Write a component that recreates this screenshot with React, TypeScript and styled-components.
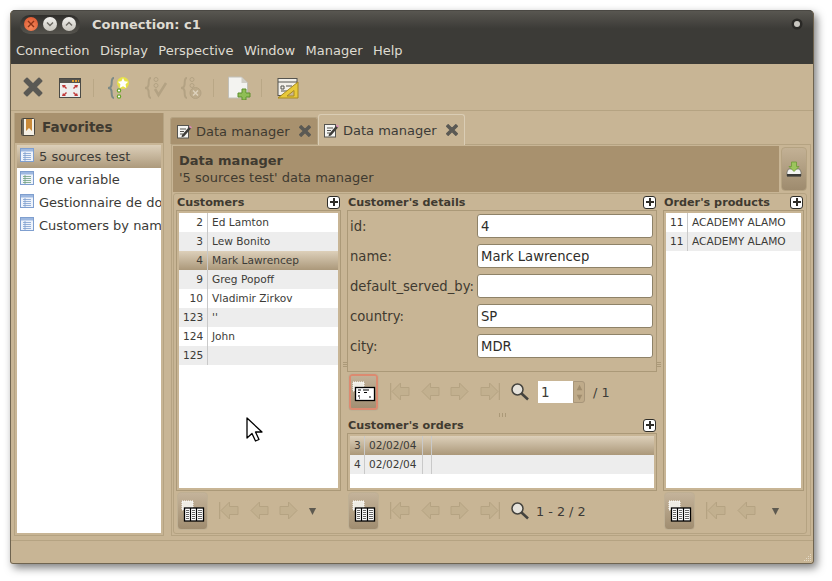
import React from 'react';
import styled, { createGlobalStyle } from 'styled-components';

const GlobalStyle = createGlobalStyle`
  html, body {
    margin: 0;
    padding: 0;
    background: #fff;
    font-family: "DejaVu Sans", sans-serif;
  }
`;

const Page = styled.div`
  width: 832px;
  height: 581px;
  overflow: hidden;
  padding: 10px 0 0 10px;
  box-sizing: border-box;
`;

const Win = styled.div`
  position: relative;
  width: 804px;
  height: 554px;
  display: flex;
  flex-direction: column;
  background: #c8b595;
  border-radius: 5px 5px 3px 3px;
  box-shadow: 3px 4px 8px rgba(0, 0, 0, 0.5);
  color: #3c3b37;
  overflow: hidden;
  &::after {
    content: '';
    position: absolute;
    inset: 0;
    border: 1px solid #6f6450;
    border-top-color: #4a4843;
    border-radius: 5px 5px 3px 3px;
    pointer-events: none;
  }
`;

const TitleBar = styled.div`
  height: 27px;
  display: flex;
  align-items: center;
  background: linear-gradient(#5a5852, #3c3b37 70%);
  padding: 1px 15px 0 10px;
  box-sizing: border-box;
`;

const Controls = styled.div`
  width: 60px;
  height: 19px;
  border-radius: 10px;
  background: linear-gradient(#2f2e2b, #55534d);
  display: flex;
  align-items: center;
  justify-content: space-around;
  padding: 0 2px;
  box-sizing: border-box;
`;

const Ctl = styled.span<{ $close?: boolean }>`
  width: 14px;
  height: 14px;
  border-radius: 50%;
  background: ${(p) => (p.$close ? 'radial-gradient(circle at 50% 70%, #f58a5c, #d9502a)' : 'linear-gradient(#f3f2ef, #c6c3bb)')};
  display: flex;
  align-items: center;
  justify-content: center;
`;

const WinTitle = styled.div`
  margin-left: 12px;
  flex: 1;
  font-size: 13px;
  font-weight: 700;
  color: #dfdbd2;
`;

const Dot = styled.span`
  width: 6px;
  height: 6px;
  border-radius: 50%;
  background: #c9c7c1;
  box-shadow: 0 0 0 2.5px #2a2926;
  margin-right: -1px;
`;

const MenuBar = styled.div`
  height: 27px;
  display: flex;
  align-items: center;
  gap: 10.4px;
  background: #3c3b37;
  padding: 0 6px 1px;
  box-sizing: border-box;
  color: #dfdbd2;
  font-size: 13px;
`;

const Toolbar = styled.div`
  height: 46px;
  display: flex;
  align-items: center;
  padding: 1px 0 0 12px;
  box-sizing: border-box;
`;

const ToolIcon = styled.span<{ $w?: number; $mr?: number }>`
  width: ${(p) => p.$w ?? 24}px;
  height: 24px;
  margin-right: ${(p) => p.$mr ?? 0}px;
  display: flex;
`;

const ToolSep = styled.span<{ $mr: number }>`
  width: 1px;
  height: 18px;
  background: #b9a786;
  margin-right: ${(p) => p.$mr}px;
`;

const Main = styled.div`
  height: 430px;
  flex: none;
  display: grid;
  grid-template-columns: 150px 1fr;
  gap: 4px;
  padding: 2px 2px 0 4px;
  border-top: 1px solid #b5a382;
  box-sizing: border-box;
`;

const Sidebar = styled.aside`
  background: #c8b595;
  border: 1px solid #b5a382;
  border-top: none;
  display: flex;
  flex-direction: column;
  height: 423px;
  box-sizing: border-box;
`;

const SideHead = styled.div`
  height: 30px;
  flex: none;
  background: #a8916e;
  display: flex;
  align-items: center;
  gap: 7px;
  padding: 0 0 2px 6px;
  box-sizing: border-box;
  font-size: 13.5px;
  font-weight: 700;
  color: #3f3a30;
`;

const SideList = styled.div`
  flex: 1;
  margin: 2px 2px 2px;
  background: #fff;
  overflow: hidden;
`;

const SideRow = styled.div<{ $sel?: boolean }>`
  height: 23px;
  display: flex;
  align-items: center;
  gap: 5px;
  padding-left: 3px;
  font-size: 13px;
  white-space: nowrap;
  background: ${(p) => (p.$sel ? 'linear-gradient(#dccfb9, #ad9a7c)' : '#fff')};
`;

const SideLabel = styled.span`
  flex: 1;
  min-width: 0;
  overflow: hidden;
`;

const Content = styled.div`
  display: flex;
  flex-direction: column;
  margin-top: 1px;
  min-width: 0;
`;

const Tabs = styled.div`
  height: 30px;
  display: flex;
  align-items: flex-end;
  padding-left: 2px;
  flex: none;
`;

const Tab = styled.div<{ $active?: boolean }>`
  position: relative;
  z-index: ${(p) => (p.$active ? 1 : 0)};
  height: ${(p) => (p.$active ? 31 : 27)}px;
  margin-bottom: ${(p) => (p.$active ? -1 : 0)}px;
  width: ${(p) => (p.$active ? 147 : 148)}px;
  box-sizing: border-box;
  display: flex;
  align-items: center;
  gap: 4px;
  padding: 0 ${(p) => (p.$active ? 4 : 5)}px;
  font-size: 13px;
  white-space: nowrap;
  background: ${(p) => (p.$active ? '#c8b595' : '#a8916e')};
  border: 1px solid ${(p) => (p.$active ? '#dacdb5' : '#b5a382')};
  border-bottom: none;
  border-radius: 3px 3px 0 0;
  color: ${(p) => (p.$active ? '#3c3b37' : '#3f3a30')};
`;

const TabClose = styled.span`
  display: flex;
  flex: none;
  margin-left: 4px;
`;

const TabPanel = styled.div`
  flex: 1;
  border: 1px solid #b5a382;
  margin: 0 1px 4px 3px;
  padding: 1px 3px 1px 1px;
  display: flex;
  flex-direction: column;
  box-sizing: border-box;
  min-height: 0;
`;

const Header = styled.div`
  height: 46px;
  flex: none;
  display: flex;
  gap: 2px;
`;

const HeaderText = styled.div`
  flex: 1;
  background: #a8916e;
  padding: 6px 6px 0;
  font-size: 13px;
  line-height: 17px;
  color: #3f3a30;
  b {
    display: block;
  }
`;

const SaveBtn = styled.div`
  width: 26px;
  margin: 1px 0;
  box-sizing: border-box;
  border: 1px solid #b5a382;
  border-radius: 4px;
  background: linear-gradient(#c3b195, #9e8b6e);
  display: flex;
  align-items: center;
  justify-content: center;
`;

const Panes = styled.div`
  position: relative;
  flex: 1;
  margin-top: 1px;
  border: 1px solid #b5a382;
  border-radius: 3px;
  display: grid;
  grid-template-columns: 169px 314px 145px;
  column-gap: 2px;
  min-height: 0;
`;

const VGrip = styled.span<{ $x: number; $y: number }>`
  position: absolute;
  left: ${(p) => p.$x}px;
  top: ${(p) => p.$y}px;
  width: 4px;
  height: 5px;
  border-top: 1px solid #ab9978;
  border-bottom: 1px solid #ab9978;
  box-sizing: border-box;
  &::after {
    content: '';
    display: block;
    height: 1px;
    margin-top: 1px;
    background: #ab9978;
  }
`;

const Col = styled.div`
  display: flex;
  flex-direction: column;
  padding: 0 2px;
  min-width: 0;
`;

const PaneTitle = styled.div`
  height: 16px;
  flex: none;
  display: flex;
  align-items: center;
  justify-content: space-between;
  padding: 0 1px;
  font-size: 11.2px;
  font-weight: 700;
  color: #3f3a30;
  white-space: nowrap;
`;

const Plus = styled.span`
  width: 13px;
  height: 13px;
  box-sizing: border-box;
  background: #fff;
  border: 1px solid #2f2d28;
  border-radius: 3px;
  display: flex;
  align-items: center;
  justify-content: center;
  flex: none;
`;

const TableBox = styled.div<{ $h: number }>`
  height: ${(p) => p.$h}px;
  flex: none;
  border: 1px solid #ab9978;
  padding: 2px;
  box-sizing: border-box;
`;

const TableInner = styled.div`
  height: 100%;
  background: #fff;
  overflow: hidden;
`;

const Row = styled.div<{ $tone?: 'alt' | 'sel' }>`
  height: 19px;
  display: flex;
  align-items: stretch;
  font-size: 10.6px;
  line-height: 19px;
  white-space: nowrap;
  background: ${(p) =>
    p.$tone === 'sel' ? 'linear-gradient(#ddd0ba, #ab987a)' : p.$tone === 'alt' ? '#ededed' : '#fff'};
`;

const Cell = styled.span<{ $w?: number; $num?: boolean }>`
  box-sizing: border-box;
  width: ${(p) => (p.$w ? `${p.$w}px` : 'auto')};
  flex: ${(p) => (p.$w ? 'none' : '1')};
  padding: 0 4px;
  text-align: ${(p) => (p.$num ? 'right' : 'left')};
  border-right: ${(p) => (p.$w ? '1px solid #c9c9c9' : 'none')};
`;

const Details = styled.div`
  height: 162px;
  flex: none;
  border: 1px solid #ab9978;
  padding: 3px 3px 0 2px;
  box-sizing: border-box;
  display: flex;
  flex-direction: column;
  gap: 6px;
`;

const Field = styled.div`
  height: 24px;
  display: grid;
  grid-template-columns: 127px 1fr;
  align-items: center;
  font-size: 13.2px;
  color: #3f3a30;
`;

const FieldValue = styled.div`
  height: 24px;
  box-sizing: border-box;
  background: #fff;
  border: 1px solid #8e8268;
  border-radius: 3px;
  padding-left: 3px;
  line-height: 23px;
  color: #2e2d2a;
`;

const Nav = styled.div`
  height: 40px;
  flex: none;
  display: flex;
  align-items: center;
  padding-left: 1px;
`;

const NavBtn = styled.div<{ $on?: boolean }>`
  width: 31px;
  height: 38px;
  flex: none;
  box-sizing: border-box;
  border: 1px solid #bfb094;
  border-radius: 4px;
  background: linear-gradient(#c4b39a, #a08d70);
  display: flex;
  align-items: center;
  justify-content: center;
  margin-right: 6px;
  box-shadow: ${(p) => (p.$on ? 'inset 0 0 0 2px #dc8a70' : 'none')};
`;

const NavArrow = styled.span`
  width: 30px;
  height: 20px;
  flex: none;
  display: flex;
  justify-content: center;
`;

const CaretSlot = styled.span<{ $w: number }>`
  width: ${(p) => p.$w}px;
  flex: none;
  display: flex;
  justify-content: center;
`;

const SearchSlot = styled.span`
  display: flex;
  flex: none;
  margin-left: 5px;
`;

const NavText = styled.span`
  font-size: 12.8px;
  margin-left: 6px;
  white-space: nowrap;
`;

const Spin = styled.div`
  display: flex;
  height: 22px;
  margin-left: 8px;
  margin-right: 2px;
`;

const SpinInput = styled.div`
  width: 35px;
  background: #fff;
  font-size: 13.5px;
  line-height: 22px;
  padding-left: 3px;
  box-sizing: border-box;
`;

const SpinArrows = styled.div`
  width: 12px;
  border: 1px solid #a8967a;
  border-radius: 0 3px 3px 0;
  background: #bfab8a;
  box-sizing: border-box;
  display: flex;
  flex-direction: column;
  align-items: center;
  justify-content: space-around;
`;

const Sash = styled.div`
  height: 5px;
  flex: none;
  display: flex;
  justify-content: center;
  align-items: center;
  gap: 2px;
  i {
    width: 1px;
    height: 4px;
    background: #ab9978;
  }
`;

const Status = styled.div`
  flex: 1;
  border-top: 1px solid #b5a382;
  position: relative;
`;

const Grip = styled.svg`
  position: absolute;
  right: 2px;
  bottom: 2px;
`;

const Cursor = styled.svg`
  position: absolute;
  left: 236px;
  top: 407px;
`;

function CloseIcon({ size = 22, color = '#5a5954' }: { size?: number; color?: string }) {
  return (
    <svg width={size} height={size} viewBox="0 0 22 22" style={{ flex: 'none' }}>
      <path d="M5 2.500 11 8.500 17 2.500 19.500 5 13.500 11 19.500 17 17 19.500 11 13.500 5 19.500 2.500 17 8.500 11 2.500 5z" fill={color} stroke={color} strokeWidth="2" strokeLinejoin="round" />
    </svg>
  );
}

function FullscreenIcon() {
  return (
    <svg width="22" height="24" viewBox="0 0 22 24">
      <rect x="0.500" y="2.500" width="21" height="19" fill="#eee" stroke="#4a4a46" />
      <rect x="1" y="3" width="20" height="4" fill="#55544f" />
      <path d="M13 5h2M16 5h2M19 5h1" stroke="#e0a030" strokeWidth="2" />
      <path d="M3 9h4l-1 1 2 2-1 1-2-2-1 1zM19 9h-4l1 1-2 2 1 1 2-2 1 1zM3 20h4l-1-1 2-2-1-1-2 2-1-1zM19 20h-4l1-1-2-2 1-1 2 2 1-1z" fill="#c03a3a" />
    </svg>
  );
}

function BraceIcon({ kind }: { kind: 'star' | 'check' | 'cross' }) {
  const c = kind === 'star' ? '#7d8a86' : '#b3a283';
  return (
    <svg width="24" height="24" viewBox="0 0 24 24">
      <path d="M7 2C4 2 5 6 4.500 9 4.300 11 3 12 1 12c2 0 3.300 1 3.500 3 .5 3-.5 7 2.500 7" fill="none" stroke={c} strokeWidth="2" />
      {kind === 'star' && (
        <>
          <circle cx="16" cy="7" r="6" fill="#ecea3a" opacity="0.85" />
          <path d="m16 2 1.600 3.300 3.600.5-2.600 2.500.6 3.600-3.200-1.700-3.200 1.700.6-3.600-2.600-2.500 3.600-.5z" fill="#fff" />
          <circle cx="12" cy="14.500" r="1.700" fill="#fff" stroke="#6aa52a" strokeWidth="1.200" />
          <circle cx="12" cy="20.500" r="1.700" fill="#fff" stroke="#6aa52a" strokeWidth="1.200" />
        </>
      )}
      {kind === 'check' && (
        <>
          <circle cx="12" cy="3.500" r="2" fill="none" stroke={c} />
          <circle cx="12" cy="9.500" r="2" fill="none" stroke={c} />
          <path d="m11 13 3.500 6L22 7" fill="none" stroke={c} strokeWidth="2.500" />
        </>
      )}
      {kind === 'cross' && (
        <>
          <circle cx="12" cy="3.500" r="2" fill="none" stroke={c} />
          <circle cx="12" cy="9.500" r="2" fill="none" stroke={c} />
          <circle cx="15.500" cy="17" r="5.500" fill="#bcaa8a" stroke={c} />
          <path d="m13 14.500 5 5m0-5-5 5" stroke="#ddd2bc" strokeWidth="1.500" />
        </>
      )}
    </svg>
  );
}

function NewDocIcon() {
  return (
    <svg width="24" height="24" viewBox="0 0 24 24">
      <path d="M1.500 1h13l6 6v15h-19z" fill="#f3f3f0" stroke="#c2c0b8" />
      <path d="M14.500 1v6h6z" fill="#d0cec6" />
      <path d="M15 13h4v4h4v4h-4v3h-4v-3h-4v-4h4z" fill="#8fbe55" stroke="#5f8f2f" />
    </svg>
  );
}

function DesignIcon() {
  return (
    <svg width="24" height="24" viewBox="0 0 24 24">
      <rect x="2" y="2.500" width="19" height="17" fill="#f2f0ea" stroke="#55544f" />
      <path d="M2 6h19M5 10h3v3H5zM10 10h6M5 15h8" stroke="#55544f" fill="none" />
      <path d="M2 22 22 6v16z" fill="#e8c93a" stroke="#a88a1e" />
      <path d="m11 20 7-5.500V20z" fill="#c8b595" stroke="#a88a1e" />
    </svg>
  );
}

function BookmarkIcon() {
  return (
    <svg width="14" height="18" viewBox="0 0 14 18">
      <rect x="0.500" y="0.500" width="13" height="17" rx="1" fill="#f4efe4" stroke="#4a463c" />
      <rect x="1" y="1" width="2" height="16" fill="#6b665a" />
      <path d="M5 1h6v12l-3-3-3 3z" fill="#c98a3a" />
    </svg>
  );
}

function SheetIcon({ green }: { green?: boolean }) {
  return (
    <svg width="14" height="14" viewBox="0 0 14 14" style={{ flex: 'none', marginTop: -3 }}>
      <rect x="0.500" y="0.500" width="13" height="13" fill="#eef3fb" stroke="#7f9fcf" />
      <rect x="1" y="1" width="12" height="2.500" fill="#9db8e0" />
      <path d="M3 5.500h8M3 7.500h8M3 9.500h8M3 11.500h8M5 4v9" stroke={green ? '#6f9f7f' : '#7f9fcf'} strokeWidth="0.800" />
    </svg>
  );
}

function PencilPage() {
  return (
    <svg width="16" height="16" viewBox="0 0 16 16" style={{ flex: 'none' }}>
      <rect x="1.500" y="2.500" width="11" height="12.500" fill="#f5f5f2" stroke="#55544f" />
      <path d="M4 6h6M4 8.500h4M4 11h3" stroke="#55544f" />
      <path d="m6 12 7-8 2 1.500-7 8-2.500.8z" fill="#3d3c38" />
      <path d="m13 4 1-1.200 2 1.500-1 1.200z" fill="#d889b8" />
    </svg>
  );
}

function SaveIcon() {
  return (
    <svg width="16" height="16" viewBox="0 0 16 16">
      <path d="M1 11 2.500 8h11L15 11v4H1z" fill="#f3f3f1" stroke="#66655f" strokeWidth="0.700" />
      <rect x="1" y="13" width="14" height="2.500" fill="#3c3b37" />
      <path d="M5.500 1h5v4.500H13L8 10.500 3 5.500h2.500z" fill="#9cc55c" stroke="#6d9a36" strokeWidth="0.800" />
    </svg>
  );
}

function PlusGlyph() {
  return (
    <svg width="8" height="8" viewBox="0 0 8 8">
      <path d="M3 0h2v3h3v2H5v3H3V5H0V3h3z" fill="#2f2d28" />
    </svg>
  );
}

function NavIcon({ dir, bar }: { dir: 'l' | 'r'; bar?: boolean }) {
  const body = 'M10.500 1 2 9.500 10.500 18v-4.500H19v-8h-8.500z';
  return (
    <svg width="20" height="20" viewBox="0 0 20 20" style={{ transform: dir === 'r' ? 'scaleX(-1)' : undefined }}>
      <path d={body} fill="#c2b08f" stroke="#b5a382" />
      {bar && <path d="M0.500 1v17" stroke="#b5a382" strokeWidth="1.500" />}
    </svg>
  );
}

function Search() {
  return (
    <svg width="20" height="20" viewBox="0 0 20 20" style={{ flex: 'none' }}>
      <circle cx="7.500" cy="7.500" r="5.500" fill="#e6e3dc" stroke="#44433e" strokeWidth="1.500" />
      <path d="m11.500 11.500 6.500 6" stroke="#44433e" strokeWidth="2.500" />
    </svg>
  );
}

function TableModeIcon({ form }: { form?: boolean }) {
  return (
    <svg width="24" height="26" viewBox="0 0 24 26">
      <rect x="1" y="3" width="11" height="9" fill="#efece4" stroke="#fff" strokeDasharray="1 1" />
      {form ? (
        <>
          <rect x="3.500" y="8.500" width="19" height="13" fill="#fff" stroke="#000" strokeWidth="1.300" />
          <path d="M6 11h3M6 13.500h2M11 11h6M12 13.500h3M6 17h2M7 19h1M17 18h2" stroke="#000" strokeWidth="1.200" />
        </>
      ) : (
        <>
          <rect x="3.500" y="10" width="19" height="13" fill="#fff" stroke="#000" strokeWidth="1.300" />
          <path d="M5 12.500h3M5 14.500h3M5 16.500h3M5 18.500h3M5 20.500h3M11 12.500h3M11 14.500h3M11 16.500h3M11 18.500h3M11 20.500h3M17 12.500h4M17 14.500h4M17 16.500h4M17 18.500h4M17 20.500h4" stroke="#666" />
          <path d="M9.500 10v13M15.500 10v13" stroke="#000" strokeWidth="1.200" />
        </>
      )}
    </svg>
  );
}

function Caret({ size = 9, up, color = '#5e5a50' }: { size?: number; up?: boolean; color?: string }) {
  return (
    <svg width={size} height={size} viewBox="0 0 10 10" style={{ transform: up ? 'rotate(180deg)' : undefined }}>
      <path d="M1 1h8L5 9z" fill={color} />
    </svg>
  );
}

const customers: [string, string][] = [
  ['2', 'Ed Lamton'],
  ['3', 'Lew Bonito'],
  ['4', 'Mark Lawrencep'],
  ['9', 'Greg Popoff'],
  ['10', 'Vladimir Zirkov'],
  ['123', "''"],
  ['124', 'John'],
  ['125', ''],
];

const fields: [string, string][] = [
  ['id:', '4'],
  ['name:', 'Mark Lawrencep'],
  ['default_served_by:', ''],
  ['country:', 'SP'],
  ['city:', 'MDR'],
];

export default function App() {
  return (
    <Page>
      <GlobalStyle />
      <Win>
        <TitleBar>
          <Controls>
            <Ctl $close>
              <svg width="8" height="8" viewBox="0 0 8 8"><path d="m1 1 6 6m0-6-6 6" stroke="#8a3216" strokeWidth="1.400" /></svg>
            </Ctl>
            <Ctl>
              <svg width="8" height="8" viewBox="0 0 8 8"><path d="m1 2.500 3 3 3-3" fill="none" stroke="#6b6962" strokeWidth="1.400" /></svg>
            </Ctl>
            <Ctl>
              <svg width="8" height="8" viewBox="0 0 8 8"><path d="m1 5.500 3-3 3 3" fill="none" stroke="#6b6962" strokeWidth="1.400" /></svg>
            </Ctl>
          </Controls>
          <WinTitle>Connection: c1</WinTitle>
          <Dot />
        </TitleBar>
        <MenuBar>
          <span>Connection</span>
          <span>Display</span>
          <span>Perspective</span>
          <span>Window</span>
          <span>Manager</span>
          <span>Help</span>
        </MenuBar>
        <Toolbar>
          <ToolIcon $w={22} $mr={15}><CloseIcon /></ToolIcon>
          <ToolIcon $w={22} $mr={12}><FullscreenIcon /></ToolIcon>
          <ToolSep $mr={13} />
          <ToolIcon $mr={13}><BraceIcon kind="star" /></ToolIcon>
          <ToolIcon $mr={12}><BraceIcon kind="check" /></ToolIcon>
          <ToolIcon $mr={9}><BraceIcon kind="cross" /></ToolIcon>
          <ToolSep $mr={13} />
          <ToolIcon $mr={10}><NewDocIcon /></ToolIcon>
          <ToolSep $mr={14} />
          <ToolIcon><DesignIcon /></ToolIcon>
        </Toolbar>
        <Main>
          <Sidebar>
            <SideHead>
              <BookmarkIcon />
              Favorites
            </SideHead>
            <SideList>
              <SideRow $sel><SheetIcon /><SideLabel>5 sources test</SideLabel></SideRow>
              <SideRow><SheetIcon green /><SideLabel>one variable</SideLabel></SideRow>
              <SideRow><SheetIcon /><SideLabel>Gestionnaire de documents</SideLabel></SideRow>
              <SideRow><SheetIcon /><SideLabel>Customers by name</SideLabel></SideRow>
            </SideList>
          </Sidebar>
          <Content>
            <Tabs>
              <Tab><PencilPage />Data manager<TabClose><CloseIcon size={14} /></TabClose></Tab>
              <Tab $active><PencilPage />Data manager<TabClose><CloseIcon size={14} /></TabClose></Tab>
            </Tabs>
            <TabPanel>
              <Header>
                <HeaderText>
                  <b>Data manager</b>
                  '5 sources test' data manager
                </HeaderText>
                <SaveBtn><SaveIcon /></SaveBtn>
              </Header>
              <Panes>
                <VGrip $x={169} $y={168} />
                <VGrip $x={483} $y={168} />
                <Col>
                  <PaneTitle>Customers<Plus><PlusGlyph /></Plus></PaneTitle>
                  <TableBox $h={281}>
                    <TableInner>
                      {customers.map(([id, name], i) => (
                        <Row key={id} $tone={i === 2 ? 'sel' : i % 2 ? 'alt' : undefined}>
                          <Cell $w={29} $num>{id}</Cell>
                          <Cell>{name}</Cell>
                        </Row>
                      ))}
                    </TableInner>
                  </TableBox>
                  <Nav>
                    <NavBtn><TableModeIcon /></NavBtn>
                    <NavArrow><NavIcon dir="l" bar /></NavArrow>
                    <NavArrow><NavIcon dir="l" /></NavArrow>
                    <NavArrow><NavIcon dir="r" /></NavArrow>
                    <CaretSlot $w={16}><Caret /></CaretSlot>
                  </Nav>
                </Col>
                <Col>
                  <PaneTitle>Customer's details<Plus><PlusGlyph /></Plus></PaneTitle>
                  <Details>
                    {fields.map(([label, value]) => (
                      <Field key={label}>
                        <span>{label}</span>
                        <FieldValue>{value}</FieldValue>
                      </Field>
                    ))}
                  </Details>
                  <Nav>
                    <NavBtn $on><TableModeIcon form /></NavBtn>
                    <NavArrow><NavIcon dir="l" bar /></NavArrow>
                    <NavArrow><NavIcon dir="l" /></NavArrow>
                    <NavArrow><NavIcon dir="r" /></NavArrow>
                    <NavArrow><NavIcon dir="r" bar /></NavArrow>
                    <SearchSlot><Search /></SearchSlot>
                    <Spin>
                      <SpinInput>1</SpinInput>
                      <SpinArrows><Caret size={7} up color="#a08d6e" /><Caret size={7} color="#a08d6e" /></SpinArrows>
                    </Spin>
                    <NavText>/ 1</NavText>
                  </Nav>
                  <Sash><i /><i /><i /></Sash>
                  <PaneTitle>Customer's orders<Plus><PlusGlyph /></Plus></PaneTitle>
                  <TableBox $h={58}>
                    <TableInner>
                      <Row $tone="sel">
                        <Cell $w={15} $num>3</Cell><Cell $w={58}>02/02/04</Cell><Cell $w={8} /><Cell />
                      </Row>
                      <Row $tone="alt">
                        <Cell $w={15} $num>4</Cell><Cell $w={58}>02/02/04</Cell><Cell $w={8} /><Cell />
                      </Row>
                    </TableInner>
                  </TableBox>
                  <Nav>
                    <NavBtn><TableModeIcon /></NavBtn>
                    <NavArrow><NavIcon dir="l" bar /></NavArrow>
                    <NavArrow><NavIcon dir="l" /></NavArrow>
                    <NavArrow><NavIcon dir="r" /></NavArrow>
                    <NavArrow><NavIcon dir="r" bar /></NavArrow>
                    <SearchSlot><Search /></SearchSlot>
                    <NavText>1 - 2 / 2</NavText>
                  </Nav>
                </Col>
                <Col>
                  <PaneTitle>Order's products<Plus><PlusGlyph /></Plus></PaneTitle>
                  <TableBox $h={281}>
                    <TableInner>
                      <Row><Cell $w={22} $num>11</Cell><Cell>ACADEMY ALAMO</Cell></Row>
                      <Row $tone="alt"><Cell $w={22} $num>11</Cell><Cell>ACADEMY ALAMO</Cell></Row>
                    </TableInner>
                  </TableBox>
                  <Nav>
                    <NavBtn><TableModeIcon /></NavBtn>
                    <NavArrow><NavIcon dir="l" bar /></NavArrow>
                    <NavArrow><NavIcon dir="l" /></NavArrow>
                    <CaretSlot $w={28}><Caret /></CaretSlot>
                  </Nav>
                </Col>
              </Panes>
            </TabPanel>
          </Content>
        </Main>
        <Status>
          <Grip width="10" height="10" viewBox="0 0 10 10">
            <path d="M8 2h1v1H8zM6 4h1v1H6zM8 4h1v1H8zM4 6h1v1H4zM6 6h1v1H6zM8 6h1v1H8zM2 8h1v1H2zM4 8h1v1H4zM6 8h1v1H6zM8 8h1v1H8z" fill="#e2d8c5" />
          </Grip>
        </Status>
        <Cursor width="18" height="26" viewBox="0 0 18 26">
          <path d="M1 1v20l5-4.500 3.500 7.500 3.500-1.500-3.500-7.500H16z" fill="#fff" stroke="#000" strokeWidth="1.300" strokeLinejoin="round" />
        </Cursor>
      </Win>
    </Page>
  );
}
